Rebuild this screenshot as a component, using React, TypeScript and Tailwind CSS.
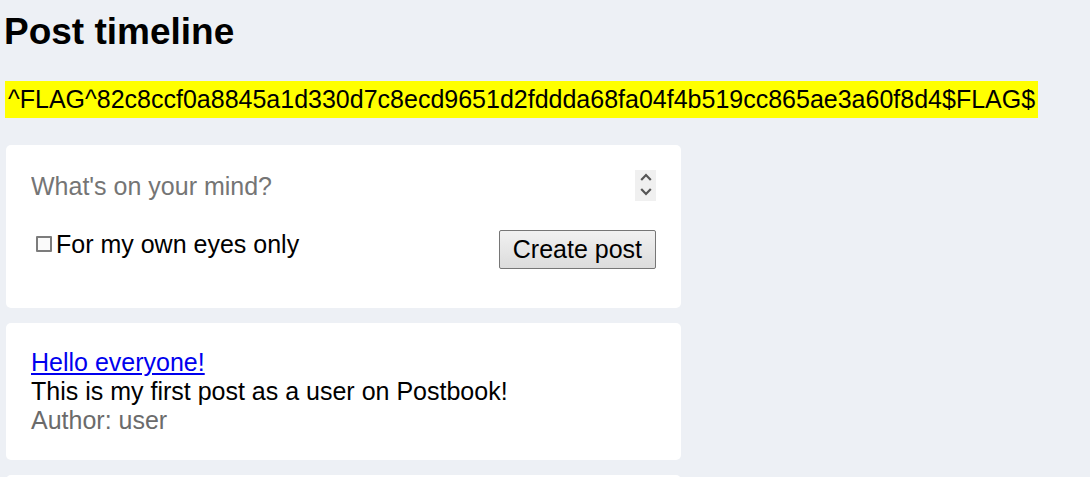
import React from "react";

function Chevron({ up }: { up: boolean }) {
  return (
    <svg width="12" height="8" viewBox="0 0 12 8" className="block">
      {up ? (
        <path d="M1.2 7 L6 2 L10.8 7" fill="none" stroke="#555555" strokeWidth="2.2" />
      ) : (
        <path d="M1.2 1 L6 6 L10.8 1" fill="none" stroke="#555555" strokeWidth="2.2" />
      )}
    </svg>
  );
}

function Post({ title, body, author }: { title: string; body: string; author: string }) {
  return (
    <div className="bg-white rounded-[5px] p-[25px] w-[675px]">
      <a href="#" className="block text-[#0000ee] underline leading-[normal]">
        {title}
      </a>
      <p className="leading-[normal] text-black">{body}</p>
      <p className="leading-[normal] text-[#6b6b6b]">Author: {author}</p>
    </div>
  );
}

export default function App() {
  return (
    <div
      className="min-h-[477px] bg-[#edf0f5] px-[6px] pb-[20px] text-[25px] text-black leading-[normal]"
      style={{ fontFamily: '"Liberation Sans", Arial, sans-serif' }}
    >
      <h1 className="pt-[11px] text-[37px] font-bold leading-[normal] -ml-[2px]">Post timeline</h1>
      <div className="mt-[28px] flex">
        <span className="bg-[#ffff00] px-[3px] py-[4px] leading-[normal] -ml-[1px]">
          ^FLAG^82c8ccf0a8845a1d330d7c8ecd9651d2fddda68fa04f4b519cc865ae3a60f8d4$FLAG$
        </span>
      </div>
      <div className="mt-[27px] flex flex-col gap-[15px]">
        <div className="bg-white rounded-[5px] px-[25px] pt-[25px] pb-[39px] w-[675px]">
          <div className="flex h-[31px]">
            <textarea
              rows={1}
              placeholder="What's on your mind?"
              className="flex-1 h-[31px] resize-none overflow-hidden bg-transparent outline-none pt-[2px] leading-[normal] placeholder:text-[#757575]"
            />
            <div className="w-[21px] h-[31px] bg-[#f0f0f0] flex flex-col items-center pt-[3px] gap-[7px]">
              <Chevron up={true} />
              <Chevron up={false} />
            </div>
          </div>
          <div className="mt-[29px] flex items-start justify-between">
            <label className="flex items-start leading-[normal]">
              <span className="block shrink-0 mt-[6px] ml-[5px] mr-[4px] w-[16px] h-[16px] border-2 border-[#7c7c7c] rounded-[1px] bg-[#fafafa]" />
              <span>For my own eyes only</span>
            </label>
            <button className="h-[39px] px-[13px] border border-[#767676] rounded-[2px] bg-linear-to-b from-[#f1f1f1] to-[#dcdcdc] text-black leading-[normal]">
              Create post
            </button>
          </div>
        </div>
        <Post title="Hello everyone!" body="This is my first post as a user on Postbook!" author="user" />
        <div className="bg-white rounded-[5px] w-[675px] h-[60px]" />
      </div>
    </div>
  );
}
